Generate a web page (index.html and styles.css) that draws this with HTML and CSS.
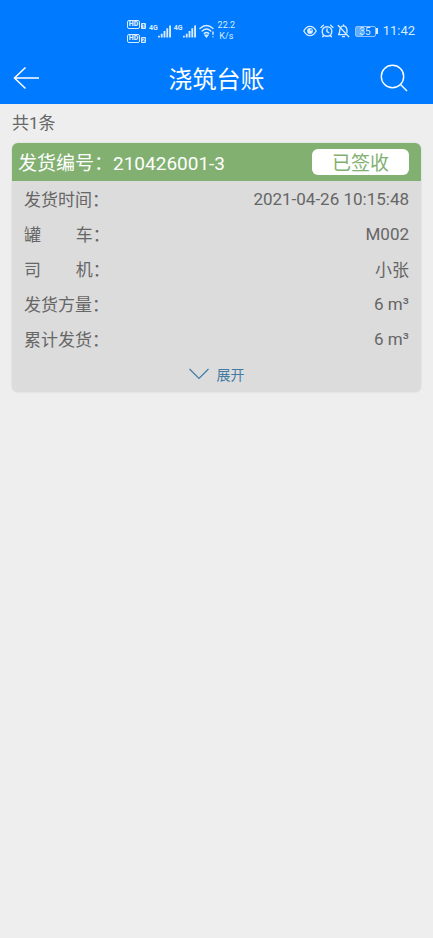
FILE: index.html
```html
<!DOCTYPE html>
<html lang="zh-CN">
<head>
<meta charset="utf-8">
<meta name="viewport" content="width=device-width, initial-scale=1">
<title>浇筑台账</title>
<link rel="stylesheet" href="styles.css">
</head>
<body>
<header class="top">
  <div class="status">
    <div class="status-group">
      <div class="hd-stack">
        <div class="hd-line"><span class="hd">HD</span><span class="sim">1</span></div>
        <div class="hd-line"><span class="hd">HD</span><span class="sim">2</span></div>
      </div>
      <div class="signal"><span class="net">4G</span>
        <svg width="13" height="13" viewBox="0 0 14 13" fill="currentColor" aria-hidden="true"><path d="M0 11h2v2H0zM3 9h2v4H3zM6 6h2v7H6zM9 3h2v10H9zM12 0h2v13h-2z"/></svg>
      </div>
      <div class="signal"><span class="net">4G</span>
        <svg width="13" height="13" viewBox="0 0 14 13" fill="currentColor" aria-hidden="true"><path d="M0 11h2v2H0zM3 9h2v4H3zM6 6h2v7H6zM9 3h2v10H9zM12 0h2v13h-2z"/></svg>
      </div>
      <svg class="wifi" width="16" height="14" viewBox="0 0 16 14" fill="none" stroke="currentColor" stroke-width="1.4" stroke-linecap="round" aria-hidden="true"><path d="M1 4.5Q7.500-1.500 14 4.500M3.200 7Q7.500 3 11.800 7M5.300 9.400Q7.500 7.500 9.700 9.400"/><path d="M6.200 11.200h2.600L7.500 12.800zM14 8v2.300M14 12.700v.1"/></svg>
      <div class="speed"><span>22.2</span><span>K/s</span></div>
    </div>
    <div class="status-group">
      <svg width="14" height="12" viewBox="0 0 14 12" fill="none" stroke="currentColor" stroke-width="1.300" aria-hidden="true"><path d="M.8 6Q3.200 1.400 7 1.400T13.200 6Q10.800 10.600 7 10.600T.8 6z"/><circle cx="7" cy="6" r="2.900" fill="currentColor" stroke="none"/><circle cx="8" cy="5" r=".8" fill="#007aff" stroke="none"/></svg>
      <svg class="alarm" width="14" height="14" viewBox="0 0 14 14" fill="none" stroke="currentColor" stroke-width="1.400" stroke-linecap="round" aria-hidden="true"><circle cx="7" cy="7.500" r="4.800"/><path d="M7 5v2.700l1.800 1M1 3.400L3.400 1.200M13 3.400L10.600 1.200M3.600 11.500l-1 1.300M10.400 11.500l1 1.300"/></svg>
      <svg class="bell" width="13" height="14" viewBox="0 0 13 14" fill="none" stroke="currentColor" stroke-width="1.300" stroke-linecap="round" stroke-linejoin="round" aria-hidden="true"><path d="M1.200 1.500l10.600 11.300M4 2.900Q6.500 1 8.800 2.900Q10.200 4.200 10 8.600M2.900 5Q3 8.800 1.500 10.700H9M5.500 12.700h2M6.500 1.800V1"/></svg>
      <div class="battery"><span class="battery-level">35</span></div>
      <time class="clock">11:42</time>
    </div>
  </div>
  <nav class="bar">
    <button class="icon-button" type="button" aria-label="返回">
      <svg width="28" height="28" viewBox="0 0 28 28" fill="none" stroke="currentColor" stroke-width="1.500" aria-hidden="true"><path d="M14.500 3.500L3.500 14l11 10.500M3.500 14H28"/></svg>
    </button>
    <h1 class="title">浇筑台账</h1>
    <button class="icon-button" type="button" aria-label="搜索">
      <svg width="28" height="28" viewBox="0 0 28 28" fill="none" stroke="currentColor" stroke-width="1.400" aria-hidden="true"><circle cx="12.500" cy="12.500" r="11.200"/><path d="M20.500 20.500l6.500 6.500"/></svg>
    </button>
  </nav>
</header>
<main class="content">
  <p class="count">共1条</p>
  <article class="card">
    <header class="card-head">
      <h2 class="card-title">发货编号：210426001-3</h2>
      <span class="badge">已签收</span>
    </header>
    <dl class="rows">
      <div class="row"><dt>发货时间：</dt><dd>2021-04-26 10:15:48</dd></div>
      <div class="row"><dt>罐&emsp;&emsp;车：</dt><dd>M002</dd></div>
      <div class="row"><dt>司&emsp;&emsp;机：</dt><dd>小张</dd></div>
      <div class="row"><dt>发货方量：</dt><dd>6 m³</dd></div>
      <div class="row"><dt>累计发货：</dt><dd>6 m³</dd></div>
    </dl>
    <button class="expand" type="button">
      <svg width="20" height="12" viewBox="0 0 20 12" fill="none" stroke="currentColor" stroke-width="1.200" aria-hidden="true"><path d="M.5 1L10 10.500 19.500 1"/></svg>
      展开
    </button>
  </article>
</main>
</body>
</html>
```

FILE: styles.css
```css
* {
  box-sizing: border-box;
}

body {
  margin: 0;
  background: #eeeeee;
  color: #666666;
  font-family: Roboto, "Noto Sans CJK SC", sans-serif;
  font-size: 17px;
}

h1, h2, p, dl, dd {
  margin: 0;
  font-weight: 400;
}

button {
  padding: 0;
  border: 0;
  background: none;
  font: inherit;
}

svg {
  display: block;
  flex: none;
}

.top {
  background: #007aff;
  color: #ffffff;
}

.status {
  display: flex;
  justify-content: space-between;
  height: 52px;
  padding: 10px 18px 0 127px;
  color: #d8ecff;
}

.status-group {
  display: flex;
  align-items: center;
  gap: 3px;
}

.hd-stack {
  display: grid;
  gap: 5px;
}

.hd-line {
  display: flex;
  align-items: flex-end;
  gap: 1px;
}

.hd {
  width: 13px;
  border: 1px solid currentColor;
  border-radius: 2px;
  font-size: 7px;
  font-weight: 900;
  line-height: 7px;
  text-align: center;
}

.sim {
  width: 5px;
  border-radius: 1px;
  background: #d8ecff;
  color: #007aff;
  font-size: 6px;
  font-weight: 700;
  line-height: 6px;
  text-align: center;
}

.signal {
  display: flex;
  align-items: flex-start;
}

.net {
  font-size: 7px;
  font-weight: 700;
  line-height: 6px;
}

.speed {
  display: grid;
  font-size: 9px;
  line-height: 11px;
  text-align: center;
}

.battery {
  display: flex;
  align-items: center;
  margin: 0 2px;
}

.battery::after {
  width: 2px;
  height: 6px;
  background: currentColor;
  content: "";
}

.battery-level {
  width: 21px;
  border: 1px solid #8cc4ff;
  border-radius: 2px;
  background: linear-gradient(to right, #62aefc 35%, transparent 35%);
  font-size: 10px;
  line-height: 9px;
  text-align: center;
}

.clock {
  font-size: 13px;
  line-height: 16px;
}

.bar {
  display: flex;
  align-items: center;
  justify-content: space-between;
  height: 52px;
  padding: 0 25px 0 11px;
}

.icon-button {
  color: inherit;
}

.title {
  padding: 4px 0 0 14px;
  font-size: 24px;
  line-height: 32px;
}

.content {
  padding: 7px 12px;
}

.count {
  margin-bottom: 8px;
  line-height: 24px;
}

.card {
  overflow: hidden;
  border-radius: 6px;
  background: #dcdcdc;
  box-shadow: 0 0 2px #d0d0d0;
}

.card-head {
  display: flex;
  align-items: center;
  justify-content: space-between;
  height: 38px;
  padding: 0 12px 0 6px;
  background: #82b071;
  color: #ffffff;
}

.card-title {
  padding-top: 4px;
  font-size: 19px;
  line-height: 22px;
}

.badge {
  padding: 4px 20px 0;
  border-radius: 6px;
  background: #ffffff;
  color: #82b071;
  font-size: 19px;
  line-height: 22px;
}

.rows {
  padding: 0 12px;
}

.row {
  display: flex;
  align-items: center;
  justify-content: space-between;
  height: 35px;
}

.expand {
  display: flex;
  align-items: center;
  justify-content: center;
  gap: 8px;
  width: 100%;
  height: 36px;
  color: #447ba3;
  font-size: 14px;
}
```
